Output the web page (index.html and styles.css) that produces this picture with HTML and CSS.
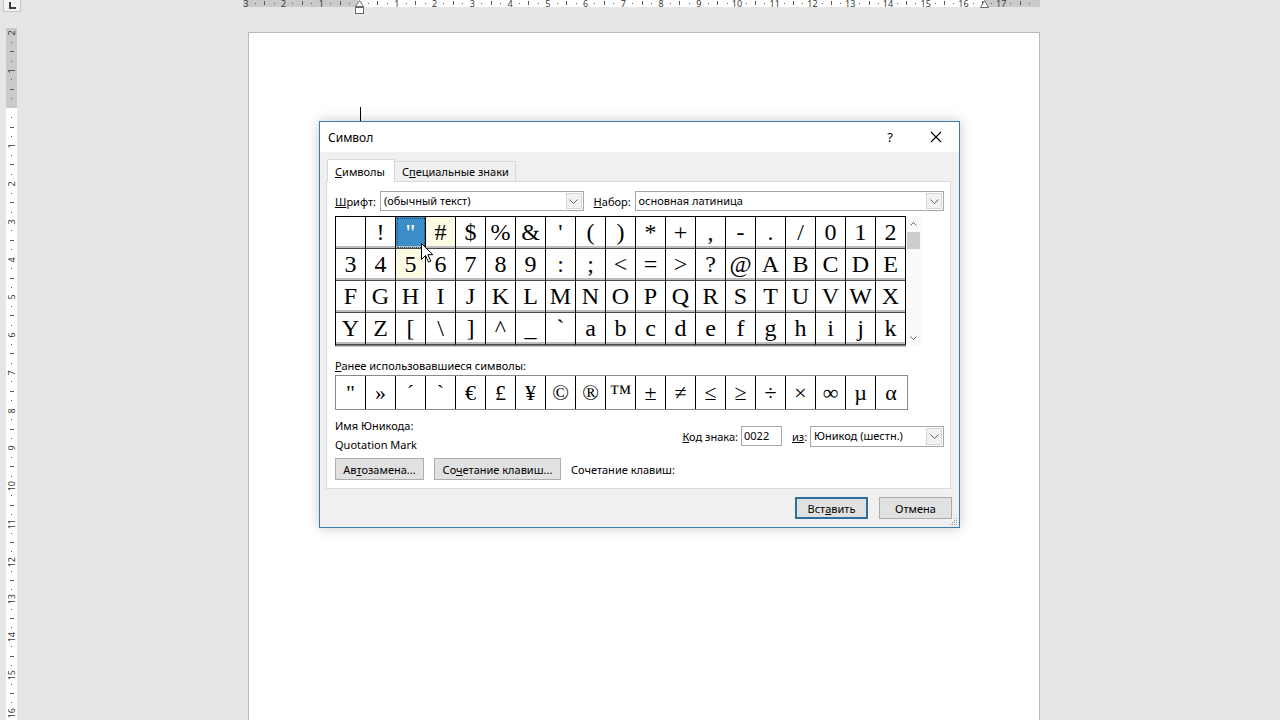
FILE: index.html
```html
<!DOCTYPE html>
<html lang="ru">
<head>
<meta charset="utf-8">
<title>Символ</title>
<link rel="stylesheet" href="styles.css">
</head>
<body>
<div class="app">
  <aside class="side">
    <div class="tabsel"><svg width="9" height="8" viewBox="0 0 9 8"><path d="M2 0V6H8" fill="none" stroke="#404040" stroke-width="2"/></svg></div>
    <div class="vruler">
      <div class="vu"><span class="n">2</span><span class="d"></span><span class="t"></span><span class="d"></span></div>
      <div class="vu"><span class="n">1</span><span class="d"></span><span class="t"></span><span class="d"></span></div>
      <div class="vu"><span class="n"></span><span class="d"></span><span class="t"></span><span class="d"></span></div>
      <div class="vu"><span class="n">1</span><span class="d"></span><span class="t"></span><span class="d"></span></div>
      <div class="vu"><span class="n">2</span><span class="d"></span><span class="t"></span><span class="d"></span></div>
      <div class="vu"><span class="n">3</span><span class="d"></span><span class="t"></span><span class="d"></span></div>
      <div class="vu"><span class="n">4</span><span class="d"></span><span class="t"></span><span class="d"></span></div>
      <div class="vu"><span class="n">5</span><span class="d"></span><span class="t"></span><span class="d"></span></div>
      <div class="vu"><span class="n">6</span><span class="d"></span><span class="t"></span><span class="d"></span></div>
      <div class="vu"><span class="n">7</span><span class="d"></span><span class="t"></span><span class="d"></span></div>
      <div class="vu"><span class="n">8</span><span class="d"></span><span class="t"></span><span class="d"></span></div>
      <div class="vu"><span class="n">9</span><span class="d"></span><span class="t"></span><span class="d"></span></div>
      <div class="vu"><span class="n">10</span><span class="d"></span><span class="t"></span><span class="d"></span></div>
      <div class="vu"><span class="n">11</span><span class="d"></span><span class="t"></span><span class="d"></span></div>
      <div class="vu"><span class="n">12</span><span class="d"></span><span class="t"></span><span class="d"></span></div>
      <div class="vu"><span class="n">13</span><span class="d"></span><span class="t"></span><span class="d"></span></div>
      <div class="vu"><span class="n">14</span><span class="d"></span><span class="t"></span><span class="d"></span></div>
      <div class="vu"><span class="n">15</span><span class="d"></span><span class="t"></span><span class="d"></span></div>
      <div class="vu"><span class="n">16</span><span class="d"></span><span class="t"></span><span class="d"></span></div>
    </div>
  </aside>
  <main class="work">
    <div class="hruler">
      <div class="hr-strip">
        <div class="hr-inner">
          <span class="hu"><span class="n">3</span><span class="d"></span><span class="t"></span><span class="d"></span></span>
          <span class="hu"><span class="n">2</span><span class="d"></span><span class="t"></span><span class="d"></span></span>
          <span class="hu"><span class="n">1</span><span class="d"></span><span class="t"></span><span class="d"></span></span>
          <span class="hu"><span class="n"></span><span class="d"></span><span class="t"></span><span class="d"></span></span>
          <span class="hu"><span class="n">1</span><span class="d"></span><span class="t"></span><span class="d"></span></span>
          <span class="hu"><span class="n">2</span><span class="d"></span><span class="t"></span><span class="d"></span></span>
          <span class="hu"><span class="n">3</span><span class="d"></span><span class="t"></span><span class="d"></span></span>
          <span class="hu"><span class="n">4</span><span class="d"></span><span class="t"></span><span class="d"></span></span>
          <span class="hu"><span class="n">5</span><span class="d"></span><span class="t"></span><span class="d"></span></span>
          <span class="hu"><span class="n">6</span><span class="d"></span><span class="t"></span><span class="d"></span></span>
          <span class="hu"><span class="n">7</span><span class="d"></span><span class="t"></span><span class="d"></span></span>
          <span class="hu"><span class="n">8</span><span class="d"></span><span class="t"></span><span class="d"></span></span>
          <span class="hu"><span class="n">9</span><span class="d"></span><span class="t"></span><span class="d"></span></span>
          <span class="hu"><span class="n">10</span><span class="d"></span><span class="t"></span><span class="d"></span></span>
          <span class="hu"><span class="n">11</span><span class="d"></span><span class="t"></span><span class="d"></span></span>
          <span class="hu"><span class="n">12</span><span class="d"></span><span class="t"></span><span class="d"></span></span>
          <span class="hu"><span class="n">13</span><span class="d"></span><span class="t"></span><span class="d"></span></span>
          <span class="hu"><span class="n">14</span><span class="d"></span><span class="t"></span><span class="d"></span></span>
          <span class="hu"><span class="n">15</span><span class="d"></span><span class="t"></span><span class="d"></span></span>
          <span class="hu"><span class="n">16</span><span class="d"></span><span class="t"></span><span class="d"></span></span>
          <span class="hu"><span class="n">17</span><span class="d"></span><span class="t"></span><span class="d"></span></span>
          <span class="hu"><span class="n"></span><span class="d"></span><span class="t"></span><span class="d"></span></span>
        </div>
      </div>
      <svg class="mk-left" width="11" height="15" viewBox="0 0 11 15"><path d="M1.5 6.5L5.5 0.5L9.5 6.5Z" fill="#fff" stroke="#6a6a6a"/><rect x="1.5" y="7.5" width="8" height="6" fill="#fff" stroke="#6a6a6a"/></svg>
      <svg class="mk-right" width="11" height="8" viewBox="0 0 11 8"><path d="M1.5 7.5L5.5 0.5L9.5 7.5Z" fill="#fff" stroke="#6a6a6a"/></svg>
    </div>

    <div class="page">
      <span class="caret"></span>

      <div class="dialog">
        <div class="titlebar">
          <div class="title">Символ</div>
          <div class="tb-btn">?</div>
          <div class="tb-btn"><svg width="12" height="12" viewBox="0 0 12 12"><path d="M1 1L11 11M11 1L1 11" stroke="#000" stroke-width="1.1"/></svg></div>
        </div>

        <div class="dbody">
          <div class="tabs">
            <div class="tab active"><span><u>С</u>имволы</span></div>
            <div class="tab tab-2"><span>С<u>п</u>ециальные знаки</span></div>
          </div>

          <div class="panel">
            <div class="font-row">
              <label class="lbl lbl-font"><u>Ш</u>рифт:</label>
              <div class="combo combo-font"><span class="ctext">(обычный текст)</span><span class="dd"><svg width="9" height="5" viewBox="0 0 9 5"><path d="M0.5 0.5L4.5 4.5L8.5 0.5" fill="none" stroke="#606060"/></svg></span></div>
              <label class="lbl lbl-set"><u>Н</u>абор:</label>
              <div class="combo combo-set"><span class="ctext">основная латиница</span><span class="dd"><svg width="9" height="5" viewBox="0 0 9 5"><path d="M0.5 0.5L4.5 4.5L8.5 0.5" fill="none" stroke="#606060"/></svg></span></div>
            </div>

            <div class="map-wrap">
              <div class="charmap">
                <span class="c"> </span><span class="c">!</span><span class="c sel">"</span><span class="c hov">#</span><span class="c">$</span><span class="c">%</span><span class="c">&amp;</span><span class="c">'</span><span class="c">(</span><span class="c">)</span><span class="c">*</span><span class="c">+</span><span class="c">,</span><span class="c">-</span><span class="c">.</span><span class="c">/</span><span class="c">0</span><span class="c">1</span><span class="c">2</span>
                <span class="c">3</span><span class="c">4</span><span class="c hov">5</span><span class="c">6</span><span class="c">7</span><span class="c">8</span><span class="c">9</span><span class="c">:</span><span class="c">;</span><span class="c">&lt;</span><span class="c">=</span><span class="c">&gt;</span><span class="c">?</span><span class="c">@</span><span class="c">A</span><span class="c">B</span><span class="c">C</span><span class="c">D</span><span class="c">E</span>
                <span class="c">F</span><span class="c">G</span><span class="c">H</span><span class="c">I</span><span class="c">J</span><span class="c">K</span><span class="c">L</span><span class="c">M</span><span class="c">N</span><span class="c">O</span><span class="c">P</span><span class="c">Q</span><span class="c">R</span><span class="c">S</span><span class="c">T</span><span class="c">U</span><span class="c">V</span><span class="c">W</span><span class="c">X</span>
                <span class="c">Y</span><span class="c">Z</span><span class="c">[</span><span class="c">\</span><span class="c">]</span><span class="c">^</span><span class="c">_</span><span class="c">`</span><span class="c">a</span><span class="c">b</span><span class="c">c</span><span class="c">d</span><span class="c">e</span><span class="c">f</span><span class="c">g</span><span class="c">h</span><span class="c">i</span><span class="c">j</span><span class="c">k</span>
              </div>
              <div class="vscroll">
                <span class="arrow"><svg width="7" height="4" viewBox="0 0 7 4"><path d="M0.5 3.5L3.5 0.5L6.5 3.5" fill="none" stroke="#606060"/></svg></span>
                <span class="thumb"></span>
                <span class="track"></span>
                <span class="arrow"><svg width="7" height="4" viewBox="0 0 7 4"><path d="M0.5 0.5L3.5 3.5L6.5 0.5" fill="none" stroke="#606060"/></svg></span>
              </div>
            </div>

            <div class="recent-label"><u>Р</u>анее использовавшиеся символы:</div>
            <div class="recent">
              <span class="r">"</span><span class="r">»</span><span class="r">´</span><span class="r">`</span><span class="r">€</span><span class="r">£</span><span class="r">¥</span><span class="r">©</span><span class="r">®</span><span class="r">™</span><span class="r">±</span><span class="r">≠</span><span class="r">≤</span><span class="r">≥</span><span class="r">÷</span><span class="r">×</span><span class="r">∞</span><span class="r">µ</span><span class="r">α</span>
            </div>

            <div class="info">
              <div class="uname">
                <div>Имя Юникода:</div>
                <div>Quotation Mark</div>
              </div>
              <div class="code-row">
                <label class="lbl"><u>К</u>од знака:</label>
                <div class="input">0022</div>
                <label class="lbl lbl-from"><u>из</u>:</label>
                <div class="combo combo-from"><span class="ctext">Юникод (шестн.)</span><span class="dd"><svg width="9" height="5" viewBox="0 0 9 5"><path d="M0.5 0.5L4.5 4.5L8.5 0.5" fill="none" stroke="#606060"/></svg></span></div>
              </div>
            </div>

            <div class="btn-row">
              <div class="btn btn-auto"><span>Ав<u>т</u>озамена...</span></div>
              <div class="btn btn-keys"><span>Со<u>ч</u>етание клавиш...</span></div>
              <div class="keys-label">Сочетание клавиш:</div>
            </div>
          </div>

          <div class="footer">
            <div class="btn btn-def"><span>Вст<u>а</u>вить</span></div>
            <div class="btn"><span>Отмена</span></div>
          </div>
        </div>

        <svg class="cursor" width="13" height="20" viewBox="0 0 13 20"><path d="M0.5 0.5V16.5L4.5 12.5L7.5 19L9.8 18L6.8 11.7H11.8Z" fill="#fff" stroke="#000" stroke-linejoin="round"/></svg>
        <svg class="grip" width="9" height="9" viewBox="0 0 9 9"><g fill="#9a9a9a"><rect x="7" y="1" width="1" height="1"/><rect x="5" y="3" width="1" height="1"/><rect x="7" y="3" width="1" height="1"/><rect x="3" y="5" width="1" height="1"/><rect x="5" y="5" width="1" height="1"/><rect x="7" y="5" width="1" height="1"/><rect x="1" y="7" width="1" height="1"/><rect x="3" y="7" width="1" height="1"/><rect x="5" y="7" width="1" height="1"/><rect x="7" y="7" width="1" height="1"/></g></svg>
      </div>
    </div>
  </main>
</div>
</body>
</html>
```

FILE: styles.css
```css
* { box-sizing: border-box; }

html, body {
  margin: 0;
  height: 720px;
  overflow: hidden;
}

body {
  background: #e6e6e6;
  font-family: "Noto Sans", "Open Sans", sans-serif;
  color: #000;
}

.app {
  display: flex;
  height: 720px;
}

/* ---------- left column: tab selector + vertical ruler ---------- */
.side {
  width: 243px;
  flex: none;
}

.tabsel {
  margin-left: 3px;
  width: 18px;
  height: 12px;
  border: 1px solid #c4c4c4;
  border-top: none;
  background: #f4f4f4;
  display: flex;
  align-items: center;
  justify-content: center;
}

.vruler {
  margin: 16px 0 0 6px;
  width: 11px;
  height: 700px;
  overflow: hidden;
  background: linear-gradient(#cacaca 0 80px, #fff 80px);
}

.vu {
  height: 37.75px;
  display: flex;
  flex-direction: column;
}

.vu > span {
  flex: 1;
  display: flex;
  align-items: center;
  justify-content: center;
}

.vu .n {
  writing-mode: vertical-rl;
  transform: rotate(180deg);
}

.n {
  font: 9px/1 "Noto Sans", sans-serif;
  color: #3a3a3a;
}

.d::before {
  content: "";
  display: block;
  width: 1px;
  height: 1px;
  background: #5a5a5a;
}

.hu .t::before {
  content: "";
  display: block;
  width: 1px;
  height: 4px;
  background: #5a5a5a;
}

.vu .t::before {
  content: "";
  display: block;
  width: 4px;
  height: 1px;
  background: #5a5a5a;
}

/* ---------- horizontal ruler ---------- */
.work {
  width: 797px;
  flex: none;
}

.hruler {
  position: relative;
  height: 7px;
}

.hr-strip {
  height: 7px;
  overflow: hidden;
  background: linear-gradient(to right, #cacaca 0 115px, #fff 115px 742px, #cacaca 742px);
}

.hr-inner {
  display: flex;
  margin: -2px 0 0 -2px;
  height: 10px;
}

.hu {
  flex: none;
  width: 37.75px;
  display: flex;
}

.hu > span {
  flex: 1;
  display: flex;
  align-items: center;
  justify-content: center;
}

.mk-left {
  position: absolute;
  left: 111px;
  top: 0;
}

.mk-right {
  position: absolute;
  left: 736px;
  top: 0;
}

/* ---------- page ---------- */
.page {
  position: relative;
  margin: 25px 0 0 5px;
  width: 792px;
  height: 700px;
  background: #fff;
  border: 1px solid #b9b9b9;
  border-bottom: none;
  padding: 74px 0 0 111px;
}

.caret {
  display: block;
  width: 1px;
  height: 14px;
  background: #000;
}

/* ---------- dialog ---------- */
.dialog {
  position: absolute;
  left: 70px;
  top: 88px;
  width: 641px;
  height: 407px;
  border: 1px solid #3b7ca4;
  background: #f0f0f0;
  box-shadow: 0 0 12px rgba(0, 0, 0, 0.22);
  display: flex;
  flex-direction: column;
  font-size: 11px;
}

.titlebar {
  height: 30px;
  background: #fff;
  display: flex;
  align-items: center;
  flex: none;
  font-size: 12px;
}

.title {
  flex: 1;
  padding-left: 8px;
}

.tb-btn {
  width: 46px;
  height: 30px;
  display: flex;
  align-items: center;
  justify-content: center;
  font-size: 13px;
}

.dbody {
  flex: 1;
  display: flex;
  flex-direction: column;
  padding: 7px 8px 8px 6px;
}

.tabs {
  display: flex;
  align-items: flex-end;
  height: 22px;
  padding-left: 1px;
  position: relative;
  z-index: 1;
}

.tab {
  height: 20px;
  border: 1px solid #d9d9d9;
  border-bottom: none;
  background: #f0f0f0;
  padding: 0 7px;
  display: flex;
  align-items: center;
  white-space: nowrap;
  margin-left: -1px;
}

.tab:first-child { margin-left: 0; }

.tab.active {
  height: 23px;
  margin-bottom: -1px;
  background: #fff;
  width: 68px;
  position: relative;
  z-index: 2;
}

.tab-2 { width: 122px; }

.panel {
  height: 308px;
  background: #fff;
  border: 1px solid #d9d9d9;
  padding: 9px 6px 0 8px;
  flex: none;
}

.font-row {
  display: flex;
  align-items: center;
  height: 20px;
}

.lbl { white-space: nowrap; }

.lbl-font { width: 45px; }

.lbl-set {
  width: 41px;
  margin-left: 10px;
}

.combo {
  display: flex;
  height: 20px;
  border: 1px solid #a6a6a6;
  background: #fff;
  padding: 1px;
}

.ctext {
  flex: 1;
  padding-left: 2px;
  line-height: 16px;
  white-space: nowrap;
}

.dd {
  width: 16px;
  border: 1px solid #d6d6d6;
  background: #f2f2f2;
  display: flex;
  align-items: center;
  justify-content: center;
}

.combo-font { width: 204px; }
.combo-set { width: 310px; }

.map-wrap {
  display: flex;
  margin-top: 5px;
}

.charmap {
  display: grid;
  grid-template-columns: repeat(19, 30px);
  grid-auto-rows: 32px;
  border-top: 1px solid #000;
  border-left: 1px solid #000;
  border-bottom: 1px solid #808080;
  box-shadow: 0 1px 0 #c8c8c8;
}

.c {
  border-right: 1px solid #000;
  border-bottom: 1px solid #4a4a4a;
  box-shadow: inset 0 -2px 0 #bdbdbd;
  font: 24px/30px "Liberation Serif", "Times New Roman", serif;
  text-align: center;
  white-space: pre;
  background: #fff;
}

.c.sel {
  background: #3d8dc8;
  color: #fff;
  outline: 1px dotted #1c4f78;
  outline-offset: -2px;
}

.c.hov { background: #fdfae3; }

.vscroll {
  width: 15px;
  display: flex;
  flex-direction: column;
  background: #fafafa;
}

.vscroll .arrow {
  height: 16px;
  display: flex;
  align-items: center;
  justify-content: center;
}

.vscroll .thumb {
  height: 17px;
  margin: 0 1px;
  background: #cdcdcd;
}

.vscroll .track { flex: 1; }

.recent-label {
  margin-top: 12px;
  line-height: 16px;
}

.recent {
  margin-top: 1px;
  display: grid;
  grid-template-columns: repeat(19, 30px);
  height: 35px;
  width: 573px;
  border: 1px solid #8a8a8a;
}

.r {
  border-right: 1px solid #000;
  font: 22px/33px "Liberation Serif", "Times New Roman", serif;
  text-align: center;
}

.r:last-child { border-right: none; }

.info {
  display: flex;
  justify-content: space-between;
  align-items: center;
  margin-top: 6px;
  height: 38px;
}

.uname { line-height: 19px; }

.code-row {
  display: flex;
  align-items: center;
  margin-top: 2px;
}

.input {
  width: 41px;
  height: 20px;
  border: 1px solid #a6a6a6;
  padding-left: 2px;
  line-height: 18px;
  margin-left: 3px;
}

.lbl-from {
  margin-left: 10px;
  width: 18px;
}

.combo-from {
  width: 134px;
  height: 21px;
}

.btn-row {
  display: flex;
  align-items: center;
  margin-top: 4px;
}

.btn {
  height: 22px;
  border: 1px solid #adadad;
  background: #e1e1e1;
  display: flex;
  align-items: center;
  justify-content: center;
  white-space: nowrap;
}

.btn-auto { width: 89px; }

.btn-keys {
  width: 127px;
  margin-left: 10px;
}

.keys-label { margin-left: 10px; }

.footer {
  display: flex;
  justify-content: flex-end;
  gap: 11px;
  margin-top: 8px;
  margin-right: -1px;
}

.footer .btn { width: 73px; }

.btn-def {
  border: 2px solid #2f6f9f;
}

.cursor {
  position: absolute;
  left: 101px;
  top: 121px;
}

.grip {
  position: absolute;
  right: 1px;
  bottom: 1px;
}
```
